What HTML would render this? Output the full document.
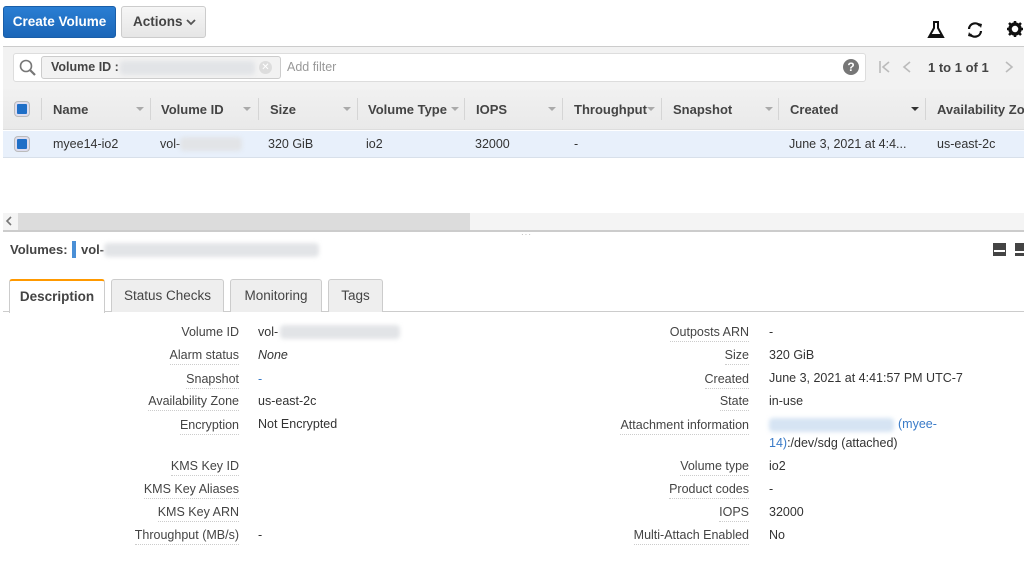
<!DOCTYPE html>
<html><head><meta charset="utf-8"><style>
*{margin:0;padding:0;box-sizing:border-box}
body{width:1024px;height:569px;overflow:hidden;background:#fff;font-family:"Liberation Sans",Arial,sans-serif;font-size:12.5px;color:#333;position:relative}
.a{position:absolute;white-space:nowrap}
.blur{position:absolute;background:#e2e4e7;filter:blur(2px);border-radius:4px}
.hd{font-weight:bold;color:#444;font-size:13px}
.sep{position:absolute;top:98px;width:1px;height:22px;background:#d5d5d5}
.car{position:absolute;top:107px;width:0;height:0;border-left:4px solid transparent;border-right:4px solid transparent;border-top:4px solid #aaa}
.lbl{position:absolute;text-align:right;white-space:nowrap;border-bottom:1px dotted #ccc;padding-bottom:2px;color:#444}
.v{position:absolute;white-space:nowrap;color:#333}
.tab{position:absolute;top:279px;height:33px;border:1px solid #ccc;border-bottom:none;background:#eee;border-radius:3px 3px 0 0;font-size:13.5px;color:#444;text-align:center;line-height:31px}
</style></head><body>
<div class="a" style="left:3px;top:6px;width:113px;height:32px;background:linear-gradient(#2a7ed3,#1b66b8);border:1px solid #1a5ea8;border-radius:3px;color:#fff;font-weight:bold;font-size:13.5px;text-align:center;line-height:30px">Create Volume</div>
<div class="a" style="left:121px;top:6px;width:85px;height:32px;background:linear-gradient(#f6f6f6,#e6e6e6);border:1px solid #ccc;border-radius:3px;color:#444;font-weight:bold;font-size:13.5px;line-height:30px;padding-left:11px">Actions</div>
<svg class="a" style="left:186px;top:18px" width="10" height="8" viewBox="0 0 10 8"><path d="M1 2l4 4 4-4" fill="none" stroke="#555" stroke-width="1.8"/></svg>
<svg class="a" style="left:927px;top:20px" width="18" height="20" viewBox="0 0 18 20"><path d="M6 2h6M7 2v6L2 17h14L11 8V2" fill="none" stroke="#111" stroke-width="2"/><path d="M4 14h10l2 3H2z" fill="#111"/></svg>
<svg class="a" style="left:965px;top:20px" width="20" height="20" viewBox="0 0 20 20"><path d="M4 9a6 6 0 0 1 11-3M16 11a6 6 0 0 1-11 3" fill="none" stroke="#111" stroke-width="2.2"/><path d="M13 3l4 1-1 4zM7 17l-4-1 1-4z" fill="#111"/></svg>
<svg class="a" style="left:1006px;top:20px" width="18" height="18" viewBox="0 0 18 18"><circle cx="9" cy="9" r="5" fill="none" stroke="#111" stroke-width="3.5"/><path d="M9 1v4M9 13v4M1 9h4M13 9h4M3 3l3 3M12 12l3 3M3 15l3-3M12 6l3-3" stroke="#111" stroke-width="2.5"/></svg>
<div class="a" style="left:3px;top:46px;width:1021px;height:1px;background:#ccc"></div>
<div class="a" style="left:3px;top:47px;width:1021px;height:42px;background:#f2f2f2"></div>
<div class="a" style="left:13px;top:53px;width:853px;height:29px;background:#fff;border:1px solid #ddd;border-radius:3px"></div>
<svg class="a" style="left:18px;top:58px" width="20" height="20" viewBox="0 0 20 20"><circle cx="8" cy="8" r="5.5" fill="none" stroke="#777" stroke-width="1.6"/><path d="M12 12l5 5" stroke="#777" stroke-width="2.2"/></svg>
<div class="a" style="left:41px;top:56px;width:240px;height:23px;background:#f2f2f2;border:1px solid #ccc;border-radius:3px"></div>
<div class="a hd" style="left:51px;top:60px;font-size:12.5px">Volume ID :</div>
<div class="blur" style="left:120px;top:61px;width:135px;height:14px"></div>
<div class="a" style="left:259px;top:61px;width:13px;height:13px;border-radius:50%;background:#ddd;color:#fff;font-size:10px;text-align:center;line-height:13px">✕</div>
<div class="a" style="left:287px;top:60px;color:#999">Add filter</div>
<div class="a" style="left:843px;top:59px;width:16px;height:16px;border-radius:50%;background:#777;color:#fff;font-weight:bold;font-size:12px;text-align:center;line-height:16px">?</div>
<svg class="a" style="left:878px;top:59px" width="40" height="16" viewBox="0 0 40 16"><path d="M2 2v12M11 3L5 8l6 5M32 3l-6 5 6 5" fill="none" stroke="#bbb" stroke-width="1.6"/></svg>
<div class="a hd" style="left:928px;top:60px;font-size:13px">1 to 1 of 1</div>
<svg class="a" style="left:1003px;top:59px" width="12" height="16" viewBox="0 0 12 16"><path d="M3 3l6 5-6 5" fill="none" stroke="#bbb" stroke-width="1.6"/></svg>
<div class="a" style="left:3px;top:89px;width:1021px;height:41px;background:linear-gradient(#f1f1f1,#e9e9e9);border-bottom:1px solid #ddd"></div>
<div class="a" style="left:15px;top:102px;width:14px;height:14px;background:#1f6fc7;border:2px solid #dde;border-radius:3px;box-shadow:0 0 0 1px #bbb"></div>
<div class="sep" style="left:41px"></div>
<div class="a hd" style="left:53px;top:102px">Name</div><div class="car" style="left:136px"></div><div class="sep" style="left:150px"></div>
<div class="a hd" style="left:161px;top:102px">Volume ID</div><div class="car" style="left:243px"></div><div class="sep" style="left:258px"></div>
<div class="a hd" style="left:270px;top:102px">Size</div><div class="car" style="left:343px"></div><div class="sep" style="left:357px"></div>
<div class="a hd" style="left:368px;top:102px">Volume Type</div><div class="car" style="left:451px"></div><div class="sep" style="left:464px"></div>
<div class="a hd" style="left:476px;top:102px">IOPS</div><div class="car" style="left:548px"></div><div class="sep" style="left:562px"></div>
<div class="a hd" style="left:574px;top:102px">Throughput</div><div class="car" style="left:647px"></div><div class="sep" style="left:661px"></div>
<div class="a hd" style="left:673px;top:102px">Snapshot</div><div class="car" style="left:765px"></div><div class="sep" style="left:778px"></div>
<div class="a hd" style="left:790px;top:102px">Created</div><div class="car" style="left:911px;border-top-color:#333"></div><div class="sep" style="left:925px"></div>
<div class="a hd" style="left:937px;top:102px">Availability Zone</div>
<div class="a" style="left:3px;top:131px;width:1021px;height:27px;background:#e8f0fb;border-bottom:1px solid #d8e0ea"></div>
<div class="a" style="left:15px;top:137px;width:14px;height:14px;background:#1f6fc7;border:2px solid #dde;border-radius:3px;box-shadow:0 0 0 1px #bbb"></div>
<div class="a" style="left:53px;top:137px">myee14-io2</div>
<div class="a" style="left:160px;top:137px">vol-</div><div class="blur" style="left:180px;top:137px;width:62px;height:14px"></div>
<div class="a" style="left:268px;top:137px">320 GiB</div>
<div class="a" style="left:366px;top:137px">io2</div>
<div class="a" style="left:475px;top:137px">32000</div>
<div class="a" style="left:574px;top:137px">-</div>
<div class="a" style="left:789px;top:137px">June 3, 2021 at 4:4...</div>
<div class="a" style="left:937px;top:137px">us-east-2c</div>
<div class="a" style="left:3px;top:213px;width:1021px;height:17px;background:#f4f4f4"></div>
<div class="a" style="left:18px;top:213px;width:452px;height:17px;background:#dcdcdc"></div>
<svg class="a" style="left:5px;top:216px" width="8" height="10" viewBox="0 0 8 10"><path d="M6 1L2 5l4 4" fill="none" stroke="#777" stroke-width="1.6"/></svg>
<div class="a" style="left:3px;top:230px;width:1021px;height:2px;background:#ccc"></div>
<div class="a" style="left:521px;top:230px;color:#aaa;font-size:8px;letter-spacing:1px">&middot;&middot;&middot;</div>
<div class="a hd" style="left:10px;top:242px;font-size:13px">Volumes:</div>
<div class="a" style="left:72px;top:241px;width:4px;height:17px;background:#4a8fd6"></div>
<div class="a hd" style="left:81px;top:242px;font-size:13px">vol-</div>
<div class="blur" style="left:104px;top:243px;width:215px;height:14px"></div>
<div class="a" style="left:993px;top:243px;width:13px;height:13px;background:#444;border:1px solid #444;box-shadow:inset 0 -3px 0 #444,inset 0 -5px 0 #fff"></div>
<div class="a" style="left:1015px;top:243px;width:13px;height:13px;background:#444;box-shadow:inset 0 -3px 0 #444,inset 0 -5px 0 #fff"></div>
<div class="a" style="left:3px;top:311px;width:1021px;height:1px;background:#ccc"></div>
<div class="tab" style="left:9px;width:96px;background:#fff;border-top:2px solid #f90;height:34px;font-weight:bold">Description</div>
<div class="tab" style="left:111px;width:113px">Status Checks</div>
<div class="tab" style="left:230px;width:92px">Monitoring</div>
<div class="tab" style="left:328px;width:55px">Tags</div>

<div class="lbl" style="right:785px;top:325px;border-bottom-color:transparent">Volume ID</div><div class="v" style="left:258px;top:325px">vol-</div><div class="blur" style="left:280px;top:325px;width:120px;height:14px"></div>
<div class="lbl" style="right:785px;top:348px">Alarm status</div><div class="v" style="left:258px;top:348px;font-style:italic">None</div>
<div class="lbl" style="right:785px;top:372px">Snapshot</div><div class="v" style="left:258px;top:372px;color:#3a7bc8">-</div>
<div class="lbl" style="right:785px;top:394px">Availability Zone</div><div class="v" style="left:258px;top:394px">us-east-2c</div>
<div class="lbl" style="right:785px;top:418px">Encryption</div><div class="v" style="left:258px;top:417px">Not Encrypted</div>
<div class="lbl" style="right:785px;top:459px">KMS Key ID</div>
<div class="lbl" style="right:785px;top:482px">KMS Key Aliases</div>
<div class="lbl" style="right:785px;top:505px">KMS Key ARN</div>
<div class="lbl" style="right:785px;top:528px">Throughput (MB/s)</div><div class="v" style="left:258px;top:528px">-</div>

<div class="lbl" style="right:275px;top:325px">Outposts ARN</div><div class="v" style="left:769px;top:325px">-</div>
<div class="lbl" style="right:275px;top:348px">Size</div><div class="v" style="left:769px;top:348px">320 GiB</div>
<div class="lbl" style="right:275px;top:372px">Created</div><div class="v" style="left:769px;top:371px">June 3, 2021 at 4:41:57 PM UTC-7</div>
<div class="lbl" style="right:275px;top:394px">State</div><div class="v" style="left:769px;top:394px">in-use</div>
<div class="lbl" style="right:275px;top:418px">Attachment information</div>
<div class="blur" style="left:769px;top:418px;width:125px;height:14px;background:#d6e4f3"></div>
<div class="v" style="left:898px;top:417px;color:#3a7bc8">(myee-</div>
<div class="v" style="left:769px;top:436px"><span style="color:#3a7bc8">14)</span>:/dev/sdg (attached)</div>
<div class="lbl" style="right:275px;top:459px">Volume type</div><div class="v" style="left:769px;top:459px">io2</div>
<div class="lbl" style="right:275px;top:482px">Product codes</div><div class="v" style="left:769px;top:482px">-</div>
<div class="lbl" style="right:275px;top:505px">IOPS</div><div class="v" style="left:769px;top:505px">32000</div>
<div class="lbl" style="right:275px;top:528px">Multi-Attach Enabled</div><div class="v" style="left:769px;top:528px">No</div>
</body></html>
